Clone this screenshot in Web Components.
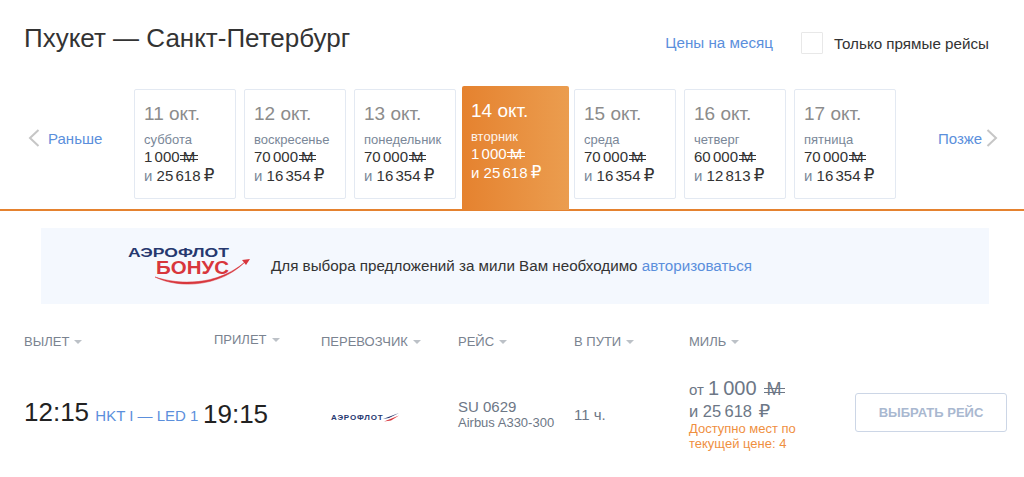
<!DOCTYPE html>
<html lang="ru">
<head>
<meta charset="utf-8">
<title>Пхукет — Санкт-Петербург</title>
<style>
  html, body { margin: 0; background: #fff; }
  body { font-family: "Liberation Sans", Arial, sans-serif; color: #333; width: 1024px; height: 477px; overflow: hidden; }
</style>
</head>
<body>
<flight-page></flight-page>

<script>
// значок миль: буква с двумя штрихами
class MileSign extends HTMLElement {
  constructor() {
    super();
    this.attachShadow({ mode: "open" });
    this.shadowRoot.innerHTML = `
      <style>
        :host { display: inline-block; position: relative; line-height: 1; }
        i { position: absolute; left: -.16em; right: -.2em; height: 1px; background: currentColor; }
        i.a { top: .42em; }
        i.b { top: .64em; }
      </style>
      <span>М</span><i class="a"></i><i class="b"></i>`;
  }
}

class RubSign extends HTMLElement {
  constructor() {
    super();
    this.attachShadow({ mode: "open" });
    this.shadowRoot.innerHTML = `
      <style>
        :host { display: inline-block; font-family: "DejaVu Sans", sans-serif; font-size: 1.12em; line-height: 1; }
      </style>₽`;
  }
}

class DateCard extends HTMLElement {
  constructor() {
    super();
    this.attachShadow({ mode: "open" });
  }

  // узкий пробел между разрядами
  num(value) {
    return value.replace("\u200a", '<span class="th">\u200a</span>');
  }

  connectedCallback() {
    const g = (k) => this.getAttribute(k);
    this.shadowRoot.innerHTML = `
      <style>
        :host {
          display: block; box-sizing: border-box; width: 102px; height: 110px;
          margin-top: 3px; padding: 13px 9px 0;
          border: 1px solid #e3e9f2; border-radius: 2px; background: #fff;
          color: #333;
        }
        :host([active]) {
          width: 107px; height: 124px; margin: 0 -3px 0 -2px; padding: 14px 9px 0;
          border: 0; border-radius: 2px 2px 0 0;
          background: linear-gradient(90deg, #e5822f, #eb9d4f); color: #fff;
        }
        .date { font-size: 19px; line-height: 22px; color: #8c8c8c; }
        :host([active]) .date { color: #fff; }
        .day { margin-top: 7px; font-size: 13px; line-height: 15px; color: #7a8798; }
        :host([active]) .day { color: #fff; opacity: .9; }
        .line { font-size: 15px; line-height: 19px; white-space: nowrap; margin-top: 0; }
        .and { color: #7a8798; }
        :host([active]) .and { color: #fff; }
        .th { letter-spacing: 1px; }
        mile-sign { margin-left: 3px; }
        rub-sign { margin-left: -1px; }
      </style>
      <div class="date">${g("date")}</div>
      <div class="day">${g("day")}</div>
      <div class="line">${this.num(g("miles"))}<mile-sign></mile-sign></div>
      <div class="line"><span class="and">и</span> ${this.num(g("rub"))} <rub-sign></rub-sign></div>`;
  }
}

class SortHead extends HTMLElement {
  constructor() {
    super();
    this.attachShadow({ mode: "open" });
    this.shadowRoot.innerHTML = `
      <style>
        :host { display: flex; align-items: center; gap: 5px; font-size: 13px; line-height: 16px; color: #7a8390; }
        b { width: 0; height: 0; border: 4.5px solid transparent; border-top: 4px solid #bcc1c7; border-bottom: 0; }
      </style>
      <slot></slot><b></b>`;
  }
}

class DateStrip extends HTMLElement {
  constructor() {
    super();
    this.attachShadow({ mode: "open" });
    this.shadowRoot.innerHTML = `
      <style>
        :host {
          display: flex; box-sizing: border-box; height: 125px; margin-top: 26px;
          border-bottom: 2px solid #e5822f; font-size: 15px;
        }
        a { color: #5b8fdc; text-decoration: none; }
        .nav { display: flex; align-items: center; height: 98px; margin-top: 3px; }
        .prev { width: 134px; padding-left: 28px; gap: 8px; box-sizing: border-box; }
        .next { padding-left: 42px; gap: 4px; }
        .cards { display: flex; gap: 8px; }
        svg { display: block; }
      </style>
      <a class="nav prev">
        <svg width="12" height="20" viewBox="0 0 12 20"><path d="M10.5 2 2 10l8.5 8" fill="none" stroke="#c6c6c6" stroke-width="2"/></svg>
        Раньше
      </a>
      <div class="cards"><slot></slot></div>
      <a class="nav next">
        Позже
        <svg width="12" height="20" viewBox="0 0 12 20"><path d="M1.5 2 10 10l-8.5 8" fill="none" stroke="#c6c6c6" stroke-width="2"/></svg>
      </a>`;
  }
}

class BonusBanner extends HTMLElement {
  constructor() {
    super();
    this.attachShadow({ mode: "open" });
    this.shadowRoot.innerHTML = `
      <style>
        :host {
          display: flex; align-items: center; box-sizing: border-box;
          height: 76px; margin: 17px 35px 0 41px; padding: 0 0 2px 86px;
          background: #f4f8fe; font-size: 15.2px; color: #333;
        }
        a { color: #5b8fdc; text-decoration: none; }
        svg { display: block; flex: none; width: 144px; height: 48px; margin-top: 2px; }
        text { font-family: "Liberation Sans", Arial, sans-serif; font-weight: bold; }
      </style>
      <svg viewBox="0 0 144 48">
        <text x="1" y="15" font-size="13.5" textLength="101" lengthAdjust="spacingAndGlyphs" fill="#26386f">АЭРОФЛОТ</text>
        <text x="29" y="32" font-size="19" textLength="73" lengthAdjust="spacingAndGlyphs" fill="#d8363c">БОНУС</text>
        <path d="M28 35c24 8 62 9 90-15 -25 25-66 27-90 15z" fill="#d8363c" stroke="#d8363c" stroke-width=".5"/>
        <path d="m123 17-8 1 4 5z" fill="#d8363c"/>
      </svg>
      <span>Для выбора предложений за мили Вам необходимо&nbsp;<a>авторизоваться</a></span>`;
  }
}

class FlightRow extends HTMLElement {
  constructor() {
    super();
    this.attachShadow({ mode: "open" });
    this.shadowRoot.innerHTML = `
      <style>
        :host { display: block; padding: 0 17px 0 24px; }
        .heads, .row { display: grid; }
        .heads { grid-template-columns: 190px 107px 137px 116px 115px auto; height: 18px; margin-top: 29px; align-items: center; }
        .heads sort-head:nth-child(2) { margin-top: -4px; }
        .row { grid-template-columns: 179px 118px 137px 116px 115px 166px auto; margin-top: 23px; align-items: center; }
        .time { font-size: 26px; line-height: 30px; padding-top: 2px; color: #222; white-space: nowrap; }
        .route { font-size: 15px; color: #5b8fdc; margin-left: -1px; }
        .logo { display: flex; align-items: center; width: 75px; margin-left: 10px; margin-top: 11px; }
        .logo span { font-size: 8px; line-height: 12px; font-weight: bold; color: #26386f; letter-spacing: .8px; }
        .info { padding-top: 3px; }
        .flight { font-size: 15px; line-height: 17px; color: #6d7786; }
        .plane { font-size: 13px; line-height: 16px; }
        .dur { font-size: 15px; padding-top: 4px; color: #6d7786; }
        .price { color: #6d7786; white-space: nowrap; }
        .l1 { font-size: 15px; line-height: 24px; padding-top: 2px; }
        .l1 .big { font-size: 20px; }
        .l1 mile-sign { font-size: 18px; margin-left: 10px; }
        .l2 { font-size: 16.5px; line-height: 22px; margin-top: -2px; }
        .l2 rub-sign { margin-left: 2px; }
        .seats { font-size: 13px; line-height: 15px; color: #ef8f3f; margin-top: -1px; white-space: normal; }
        button {
          width: 152px; height: 39px; padding: 0; background: #fff;
          border: 1px solid #ccd6e6; border-radius: 3px;
          font: bold 13px "Liberation Sans", Arial, sans-serif; color: #a9b8d0;
        }
      </style>
      <div class="heads">
        <sort-head>ВЫЛЕТ</sort-head>
        <sort-head>ПРИЛЕТ</sort-head>
        <sort-head>ПЕРЕВОЗЧИК</sort-head>
        <sort-head>РЕЙС</sort-head>
        <sort-head>В ПУТИ</sort-head>
        <sort-head>МИЛЬ</sort-head>
      </div>
      <div class="row">
        <div class="time">12:15 <span class="route">HKT I — LED 1</span></div>
        <div class="time">19:15</div>
        <div class="logo">
          <span>АЭРОФЛОТ</span>
          <svg width="18" height="12" viewBox="0 0 18 12"><path d="M0 7 16 1 6 6z" fill="#26386f"/><path d="M2 8 16 3 9 7z" fill="#fff"/><path d="M1 9.500 16 3.500 8 8.500z" fill="#d8363c"/></svg>
        </div>
        <div class="info">
          <div class="flight">SU 0629</div>
          <div class="flight plane">Airbus A330-300</div>
        </div>
        <div class="dur">11 ч.</div>
        <div class="price">
          <div class="l1">от <span class="big">1&#8201;000</span><mile-sign></mile-sign></div>
          <div class="l2">и 25&#8201;618 <rub-sign></rub-sign></div>
          <div class="seats">Доступно мест по<br>текущей цене: 4</div>
        </div>
        <button>ВЫБРАТЬ РЕЙС</button>
      </div>`;
  }
}

class FlightPage extends HTMLElement {
  constructor() {
    super();
    this.attachShadow({ mode: "open" });
    this.shadowRoot.innerHTML = `
      <style>
        :host { display: block; }
        header { display: flex; align-items: flex-start; height: 60px; padding: 0 35px 0 24px; box-sizing: border-box; }
        h1 { margin: 23px 0 0; font-size: 26px; line-height: 30px; font-weight: normal; color: #333; flex: 1; }
        a { color: #5b8fdc; font-size: 15.2px; line-height: 18px; margin: 34px 28px 0 0; }
        label { display: flex; align-items: center; gap: 11px; margin-top: 32px; font-size: 15.2px; color: #333; }
        .box { width: 20px; height: 20px; border: 1px solid #e8e8e8; border-radius: 1px; }
      </style>
      <header>
        <h1>Пхукет — Санкт-Петербург</h1>
        <a>Цены на месяц</a>
        <label><span class="box"></span>Только прямые рейсы</label>
      </header>
      <date-strip>
        <date-card date="11 окт." day="суббота" miles="1&#8202;000" rub="25&#8202;618"></date-card>
        <date-card date="12 окт." day="воскресенье" miles="70&#8202;000" rub="16&#8202;354"></date-card>
        <date-card date="13 окт." day="понедельник" miles="70&#8202;000" rub="16&#8202;354"></date-card>
        <date-card active date="14 окт." day="вторник" miles="1&#8202;000" rub="25&#8202;618"></date-card>
        <date-card date="15 окт." day="среда" miles="70&#8202;000" rub="16&#8202;354"></date-card>
        <date-card date="16 окт." day="четверг" miles="60&#8202;000" rub="12&#8202;813"></date-card>
        <date-card date="17 окт." day="пятница" miles="70&#8202;000" rub="16&#8202;354"></date-card>
      </date-strip>
      <bonus-banner></bonus-banner>
      <flight-row></flight-row>`;
  }
}

customElements.define("mile-sign", MileSign);
customElements.define("rub-sign", RubSign);
customElements.define("date-card", DateCard);
customElements.define("sort-head", SortHead);
customElements.define("date-strip", DateStrip);
customElements.define("bonus-banner", BonusBanner);
customElements.define("flight-row", FlightRow);
customElements.define("flight-page", FlightPage);
</script>
</body>
</html>
